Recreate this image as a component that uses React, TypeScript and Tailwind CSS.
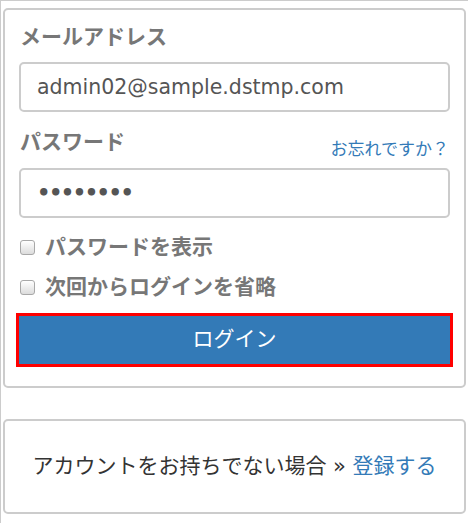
import React from "react";

const FONT = { fontFamily: '"DejaVu Sans", "Noto Sans CJK JP", sans-serif' };

function Check({ label }: { label: string }) {
    return (
        <label className="flex items-center h-[30px] gap-[10px] pl-[1px]">
            <span className="w-[15px] h-[15px] rounded-[3px] border border-[#a8a8a8] bg-gradient-to-b from-white to-[#dcdcdc] shrink-0" />
            <span className="text-[21px] font-bold text-[#777] leading-[30px]">{label}</span>
        </label>
    );
}

export default function App() {
    return (
        <div style={FONT} className="min-h-[523px] w-[468px] border-t border-l border-[#ccc] pt-[7px] pl-[2px] pr-[2px] bg-white">
            <div className="rounded-[5px] border-2 border-[#ccc] px-[14px] pt-[12px] pb-[22px]">
                <div className="text-[21px] font-bold text-[#777] leading-[30px] pl-[1px]">メールアドレス</div>
                <input
                    readOnly
                    value="admin02@sample.dstmp.com"
                    className="mt-[10px] block w-full h-[50px] rounded-[5px] border-2 border-[#ccc] px-[16px] text-[20.5px] text-[#555] outline-none"
                />

                <div className="mt-[15px] flex items-end justify-between">
                    <span className="text-[21px] font-bold text-[#777] leading-[30px] pl-[1px]">パスワード</span>
                    <a href="#" className="text-[17px] text-[#337ab7] leading-[24px] -mb-[4px] pr-[1px]">お忘れですか？</a>
                </div>
                <input
                    readOnly
                    value="••••••••"
                    className="mt-[11px] block w-full h-[50px] rounded-[5px] border-2 border-[#ccc] px-[16px] text-[21px] tracking-[-1.5px] font-bold text-[#555] outline-none"
                />

                <div className="mt-[14px] flex flex-col gap-[10px]">
                    <Check label="パスワードを表示" />
                    <Check label="次回からログインを省略" />
                </div>

                <button className="mt-[14px] w-full h-[48px] bg-[#337ab7] text-white text-[21px] outline-[3px] outline-solid outline-[#ff0000]">
                    ログイン
                </button>
            </div>

            <div className="mt-[31px] rounded-[5px] border-2 border-[#ccc] h-[95px] flex items-center justify-center text-[21px] text-[#333]">
                <span>
                    アカウントをお持ちでない場合 »{" "}
                    <a href="#" className="text-[#337ab7]">登録する</a>
                </span>
            </div>
        </div>
    );
}
